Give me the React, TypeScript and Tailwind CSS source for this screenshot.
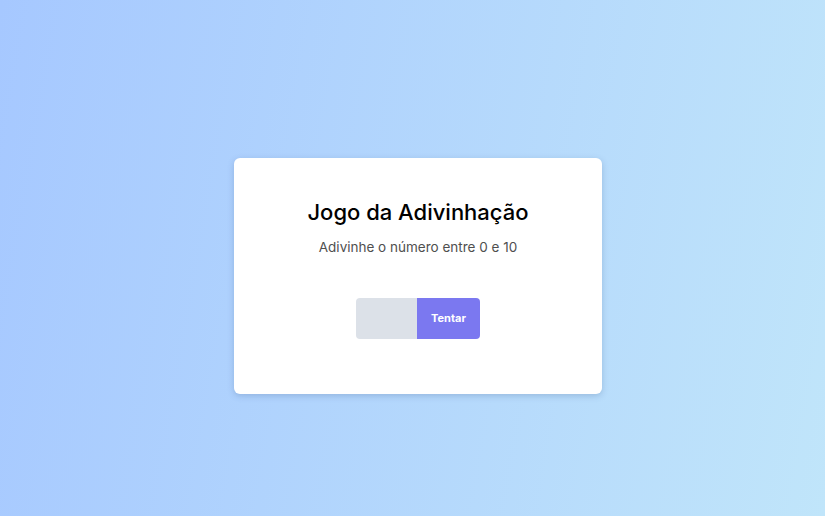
export default function App() {
  return (
    <main
      className="flex h-[516px] w-full items-center justify-center bg-linear-[100deg] from-[#a6c8ff] to-[#c0e5fa] pl-[11px] pt-[36px]"
      style={{ fontFamily: '"Inter", "Open Sans", sans-serif' }}
    >
      {/* Card */}
      <div className="flex h-[236px] w-[368px] flex-col items-center rounded-md bg-white pt-[40px] shadow-[0_2px_6px_rgba(60,90,140,0.25)]">
        <h1 className="text-[22px] font-medium leading-[28px] text-black">Jogo da Adivinhação</h1>
        <p className="mt-[11px] text-[13.5px] leading-5 text-[#4f4f4f]">Adivinhe o número entre 0 e 10</p>

        <form className="mt-[41px] flex" onSubmit={(e) => e.preventDefault()}>
          <input
            type="number"
            className="h-[41px] w-[61px] rounded-l bg-[#dce1e8] px-2 text-sm outline-none"
          />
          <button
            type="submit"
            className="h-[41px] w-[63px] rounded-r bg-[#7b78f0] text-[11px] font-bold text-white"
          >
            Tentar
          </button>
        </form>
      </div>
    </main>
  );
}
